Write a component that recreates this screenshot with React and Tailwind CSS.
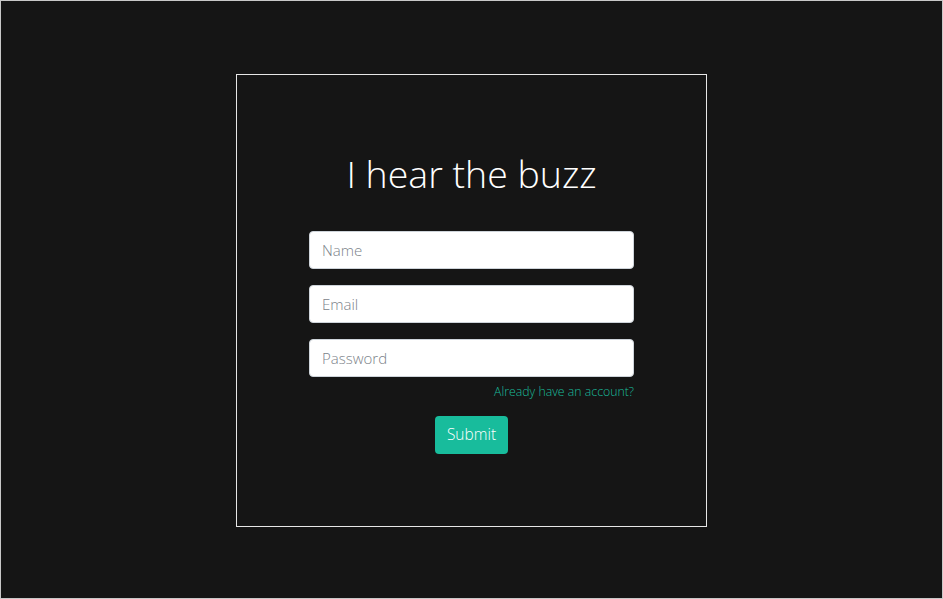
import React from "react";

const App = () => {
  return (
    <div
      className="h-[599px] w-[943px] bg-[#151515] border border-[#c8c8c8] pt-[2px] flex items-center justify-center"
      style={{ fontFamily: '"Open Sans", "Noto Sans", sans-serif' }}
    >
      <div className="w-[471px] h-[453px] border border-[#e6e6e6] flex flex-col items-center pt-[75px] px-[72px]">
        <h1 className="text-[37.5px] font-light text-white leading-[48px] mb-[33px]">I hear the buzz</h1>
        <form className="w-full flex flex-col" onSubmit={(e) => e.preventDefault()}>
          <input
            placeholder="Name"
            className="h-[38px] w-full bg-white rounded-[4px] border border-[#ced4da] px-[12px] text-[15px] font-light text-gray-800 placeholder:text-[#7b8289] outline-none mb-[16px]"
          />
          <input
            placeholder="Email"
            className="h-[38px] w-full bg-white rounded-[4px] border border-[#ced4da] px-[12px] text-[15px] font-light text-gray-800 placeholder:text-[#7b8289] outline-none mb-[16px]"
          />
          <input
            type="password"
            placeholder="Password"
            className="h-[38px] w-full bg-white rounded-[4px] border border-[#ced4da] px-[12px] text-[15px] font-light text-gray-800 placeholder:text-[#7b8289] outline-none"
          />
          <div className="flex justify-end mt-[6px]">
            <a href="#" className="text-[12.3px] font-light text-[#1abc9c] leading-[18px]">
              Already have an account?
            </a>
          </div>
          <div className="flex justify-center mt-[15px]">
            <button className="h-[38px] px-[12px] bg-[#18bc9c] rounded-[4px] text-white text-[15.5px] font-light">
              Submit
            </button>
          </div>
        </form>
      </div>
    </div>
  );
};

export default App;
